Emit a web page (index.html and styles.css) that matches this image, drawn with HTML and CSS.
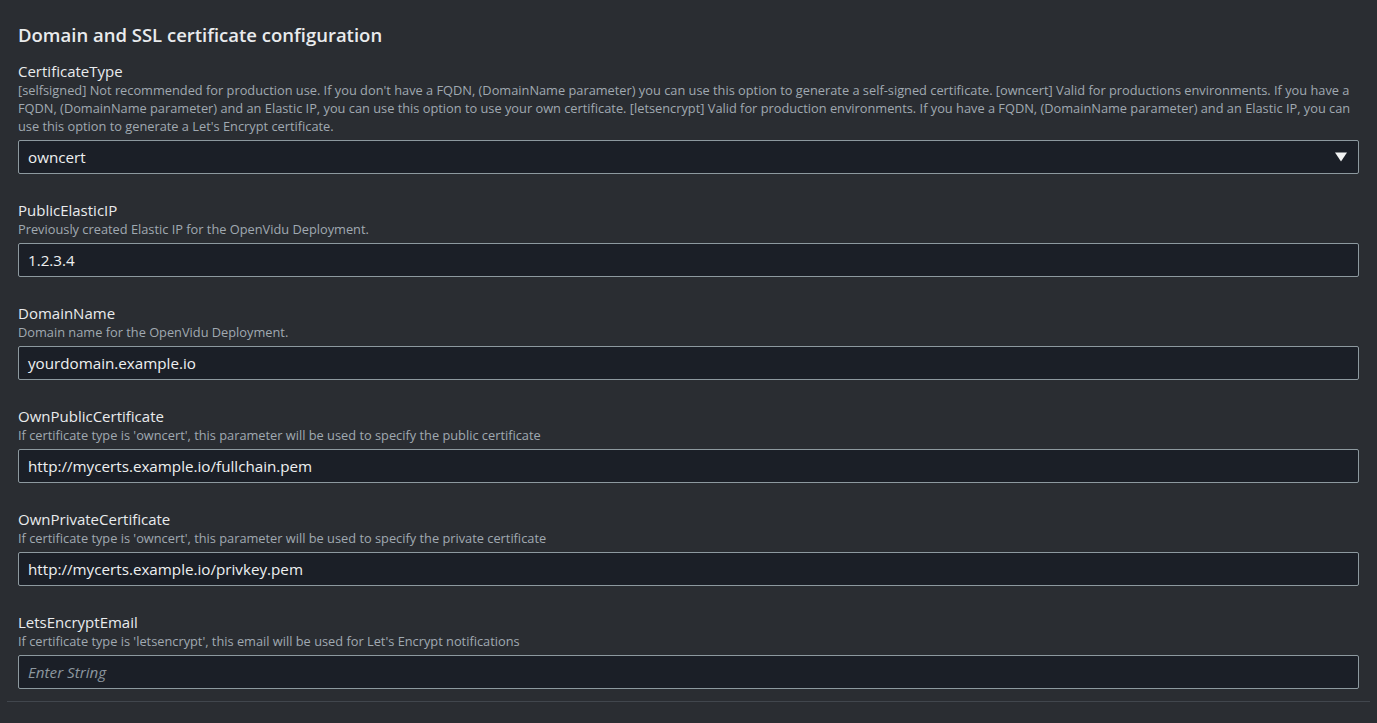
FILE: index.html
```html
<!DOCTYPE html>
<html lang="en">
<head>
<meta charset="utf-8">
<title>Domain and SSL certificate configuration</title>
<link rel="stylesheet" href="styles.css">
</head>
<body>
<div class="panel">
  <div class="content">
    <h2 class="title">Domain and SSL certificate configuration</h2>

    <div class="field">
      <div class="label">CertificateType</div>
      <div class="desc">[selfsigned] Not recommended for production use. If you don't have a FQDN, (DomainName parameter) you can use this option to generate a self-signed certificate. [owncert] Valid for productions environments. If you have a FQDN, (DomainName parameter) and an Elastic IP, you can use this option to use your own certificate. [letsencrypt] Valid for production environments. If you have a FQDN, (DomainName parameter) and an Elastic IP, you can use this option to generate a Let's Encrypt certificate.</div>
      <div class="input select">
        <span class="value">owncert</span>
        <svg class="caret" width="12" height="10" viewBox="0 0 12 10"><path d="M0 0.5 H12 L6 9.5 Z" fill="#f2f3f3"/></svg>
      </div>
    </div>

    <div class="field">
      <div class="label">PublicElasticIP</div>
      <div class="desc">Previously created Elastic IP for the OpenVidu Deployment.</div>
      <div class="input"><span class="value">1.2.3.4</span></div>
    </div>

    <div class="field">
      <div class="label">DomainName</div>
      <div class="desc">Domain name for the OpenVidu Deployment.</div>
      <div class="input"><span class="value">yourdomain.example.io</span></div>
    </div>

    <div class="field">
      <div class="label">OwnPublicCertificate</div>
      <div class="desc">If certificate type is 'owncert', this parameter will be used to specify the public certificate</div>
      <div class="input"><span class="value">http://mycerts.example.io/fullchain.pem</span></div>
    </div>

    <div class="field">
      <div class="label">OwnPrivateCertificate</div>
      <div class="desc">If certificate type is 'owncert', this parameter will be used to specify the private certificate</div>
      <div class="input"><span class="value">http://mycerts.example.io/privkey.pem</span></div>
    </div>

    <div class="field last">
      <div class="label">LetsEncryptEmail</div>
      <div class="desc">If certificate type is 'letsencrypt', this email will be used for Let's Encrypt notifications</div>
      <div class="input"><span class="placeholder">Enter String</span></div>
    </div>
  </div>
  <div class="divider"></div>
</div>
</body>
</html>
```

FILE: styles.css
```css
html, body {
  margin: 0;
  padding: 0;
  background: #2a2d32;
  height: 100%;
}
body {
  font-family: "Open Sans", "Noto Sans", "DejaVu Sans", sans-serif;
  color: #e9ebed;
}
.panel {
  padding: 0 7px;
}
.content {
  padding: 23px 11px 0 11px;
}
.title {
  margin: 0 0 14px 0;
  font-size: 18.5px;
  line-height: 24px;
  font-weight: 600;
  color: #e9ebed;
}
.field {
  margin-bottom: 26px;
}
.field.last {
  margin-bottom: 12px;
}
.label {
  font-size: 15px;
  line-height: 20px;
  color: #e9ebed;
}
.desc {
  font-size: 12.8px;
  line-height: 18px;
  color: #a0a9b1;
}
.input {
  margin-top: 5px;
  height: 34px;
  box-sizing: border-box;
  border: 1px solid #8d999f;
  border-radius: 2px;
  background: #1b1f27;
  display: flex;
  align-items: center;
  padding: 0 10px 0 9px;
  font-size: 15.2px;
}
.select {
  justify-content: space-between;
}
.value {
  color: #eef0f1;
}
.placeholder {
  color: #8c969e;
  font-style: italic;
}
.caret {
  display: block;
  margin-right: 1px;
}
.divider {
  height: 1px;
  background: #41464d;
}
```
